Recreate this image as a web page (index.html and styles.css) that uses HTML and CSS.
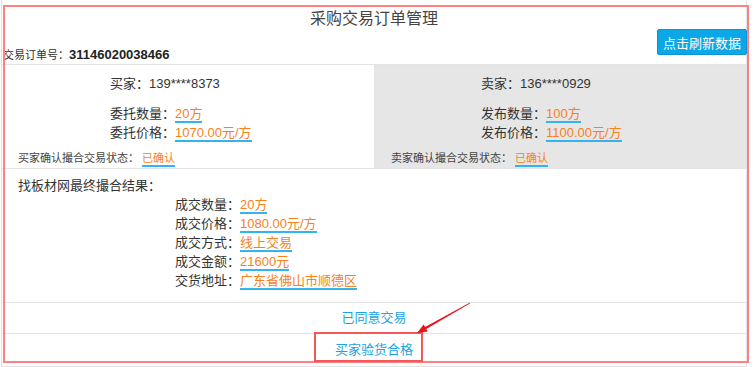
FILE: index.html
```html
<!DOCTYPE html>
<html lang="zh-CN">
<head>
    <meta charset="UTF-8">
    <meta name="viewport" content="width=device-width, initial-scale=1.0">
    <title>采购交易订单管理</title>
    <link rel="stylesheet" href="styles.css">
</head>

<body>
    <div class="page">
        <div class="head">
            <h1 class="title">采购交易订单管理</h1>
            <div class="head-row">
                <div class="order-no">交易订单号：<b>31146020038466</b></div>
                <button class="refresh" type="button">点击刷新数据</button>
            </div>
        </div>

        <div class="compare">
            <div class="party buyer">
                <div class="who">买家：139****8373</div>
                <div class="line">委托数量：<span class="val">20方</span></div>
                <div class="line">委托价格：<span class="val">1070.00元/方</span></div>
                <div class="status">买家确认撮合交易状态： <span class="val">已确认</span></div>
            </div>
            <div class="party seller">
                <div class="who">卖家：136****0929</div>
                <div class="line">发布数量：<span class="val">100方</span></div>
                <div class="line">发布价格：<span class="val">1100.00元/方</span></div>
                <div class="status">卖家确认撮合交易状态： <span class="val">已确认</span></div>
            </div>
        </div>

        <div class="result">
            <div class="result-title">找板材网最终撮合结果：</div>
            <div class="result-rows">
                <div class="line">成交数量：<span class="val">20方</span></div>
                <div class="line">成交价格：<span class="val">1080.00元/方</span></div>
                <div class="line">成交方式：<span class="val">线上交易</span></div>
                <div class="line">成交金额：<span class="val">21600元</span></div>
                <div class="line">交货地址：<span class="val">广东省佛山市顺德区</span></div>
            </div>
        </div>

        <div class="action agreed">已同意交易</div>
        <div class="action inspect">买家验货合格</div>
    </div>

    <!-- annotation drawn over the screenshot -->
    <svg class="mark" width="756" height="367" viewBox="0 0 756 367">
        <rect x="4" y="6" width="744" height="356" fill="none" stroke="#ff8080" stroke-width="2"/>
        <rect x="315" y="333" width="107" height="28" fill="none" stroke="#f55757" stroke-width="2"/>
        <path d="M417,333 L423.7,324.6 L425.1,327.1 L470,302.6 L470.3,303.3 L426.3,329.1 L427.7,331.6 Z" fill="#e8141c"/>
    </svg>
</body>
</html>
```

FILE: styles.css
```css
body {
    margin: 0;
    font-family: "Liberation Sans", "Noto Sans CJK SC", sans-serif;
    font-size: 13px;
    color: #333;
    background: #fff;
}

.page {
    width: 746px;
    height: 367px;
    margin-left: 1px;
    box-sizing: border-box;
    border: 1px solid #e2e2e2;
    border-top: none;
}

.title {
    margin: 0;
    padding-top: 9px;
    font-size: 16px;
    font-weight: normal;
    line-height: 20px;
    text-align: center;
    color: #444;
}

.head-row {
    display: flex;
    justify-content: space-between;
    align-items: flex-end;
    height: 35px;
}

.order-no {
    padding-left: 1px;
    font-size: 11px;
    line-height: 18px;
    color: #333;
}

.order-no b {
    font-size: 13px;
    color: #222;
}

.refresh {
    height: 26px;
    margin: 0 -1px 9px 0;
    padding: 0 5px;
    border: 1px solid #0897cf;
    border-radius: 2px;
    background-color: #0ba7e6;
    color: white;
    font-family: inherit;
    font-size: 13px;
    cursor: pointer;
}

.compare {
    display: flex;
    height: 104px;
    box-sizing: border-box;
    border-top: 1px solid #e4e4e4;
}

.party {
    padding-top: 9px;
    box-sizing: border-box;
}

.buyer {
    width: 372px;
    padding-left: 108px;
}

.seller {
    flex: 1;
    padding-left: 107px;
    background-color: #e6e6e6;
}

.who {
    line-height: 19px;
    margin-bottom: 11px;
}

.line {
    line-height: 19px;
}

.val {
    display: inline-block;
    line-height: 15px;
    color: #f7821b;
    border-bottom: 2px solid #33b3ef;
}

.status {
    margin-top: 7px;
    font-size: 11px;
    line-height: 18px;
    color: #444;
}

.status .val {
    line-height: 13px;
}

.buyer .status {
    margin-left: -92px;
}

.seller .status {
    margin-left: -90px;
}

.result {
    height: 134px;
    box-sizing: border-box;
    padding: 7px 0 12px 16px;
    border-top: 1px solid #e4e4e4;
}

.result-title {
    line-height: 19px;
}

.result-rows {
    padding-left: 157px;
}

.action {
    text-align: center;
    color: #1aa3e3;
    border-top: 1px solid #e4e4e4;
}

.agreed {
    line-height: 30px;
}

.inspect {
    line-height: 32px;
}

.mark {
    position: absolute;
    left: 0;
    top: 0;
    pointer-events: none;
}
```
